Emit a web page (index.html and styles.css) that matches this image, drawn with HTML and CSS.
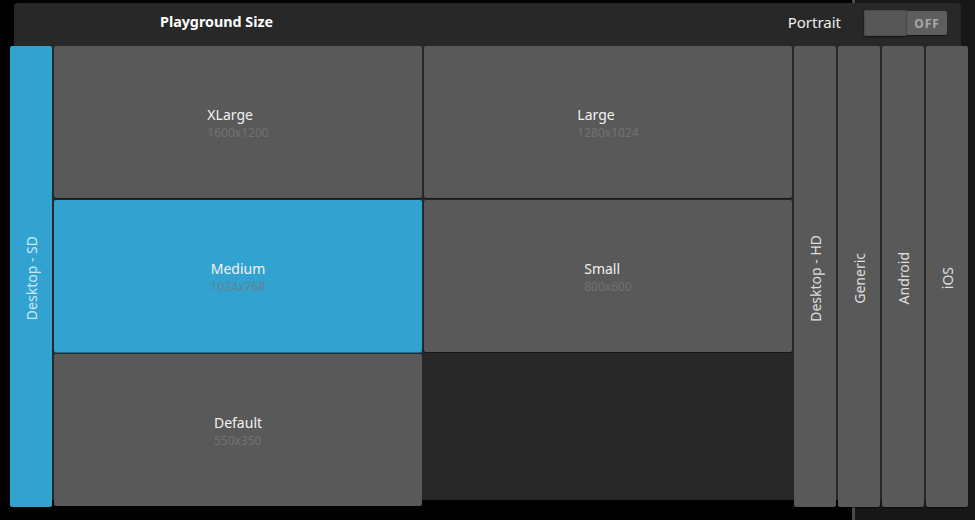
FILE: index.html
```html
<!DOCTYPE html>
<html lang="en">
<head>
  <meta charset="UTF-8" />
  <title>Playground Size</title>
  <link rel="stylesheet" href="styles.css">
</head>
<body>
  <div class="stage">
    <div class="panel">
      <div class="panel-head">
        <div class="panel-title">Playground Size</div>
        <div class="spacer"></div>
        <div class="portrait-label">Portrait</div>
        <div class="toggle">
          <span class="toggle-knob"></span>
          <span class="toggle-state">OFF</span>
        </div>
      </div>

      <div class="tiles">
        <div class="side active"><span>Desktop - SD</span></div>

        <div class="size-grid">
          <div class="size-tile">
            <div class="size-text"><div class="size-name">XLarge</div><div class="size-dim">1600x1200</div></div>
          </div>
          <div class="size-tile">
            <div class="size-text"><div class="size-name">Large</div><div class="size-dim">1280x1024</div></div>
          </div>
          <div class="size-tile active">
            <div class="size-text"><div class="size-name">Medium</div><div class="size-dim">1024x768</div></div>
          </div>
          <div class="size-tile">
            <div class="size-text"><div class="size-name">Small</div><div class="size-dim">800x600</div></div>
          </div>
          <div class="size-tile">
            <div class="size-text"><div class="size-name">Default</div><div class="size-dim">550x350</div></div>
          </div>
        </div>

        <div class="side"><span>Desktop - HD</span></div>
        <div class="side"><span>Generic</span></div>
        <div class="side"><span>Android</span></div>
        <div class="side"><span>iOS</span></div>
      </div>
    </div>
  </div>
</body>
</html>
```

FILE: styles.css
```css
* { margin: 0; padding: 0; box-sizing: border-box; }

html, body {
  height: 100%;
  overflow: hidden;
}

body {
  font-family: 'Noto Sans', 'Open Sans', sans-serif;
  /* pane behind the dialog: black, a grey divider, then a dark strip */
  background: linear-gradient(to right, #000 0, #000 852px, #4a4a4a 852px, #4a4a4a 855px, #171717 855px);
}

.stage {
  padding: 3px 14px 0 14px;
}

.panel {
  height: 497px;
  background: #282828;
  border-radius: 4px;
}

/* header */
.panel-head {
  display: flex;
  align-items: center;
  height: 43px;
  padding: 0 14px 0 146px;
}

.panel-title {
  color: #fff;
  font-size: 14.3px;
  font-weight: bold;
  padding-bottom: 6px;
}

.spacer { flex: 1; }

.portrait-label {
  color: #eee;
  font-size: 15px;
  padding-bottom: 6px;
}

.toggle {
  display: flex;
  align-items: center;
  margin-left: 23px;
  width: 83px;
  height: 26px;
  margin-bottom: 3px;
}

.toggle-knob {
  width: 43px;
  height: 26px;
  background: #575757;
  border-radius: 2px;
  box-shadow: 0 1px 2px rgba(0, 0, 0, 0.6), inset 0 0 0 1px #4c4c4c;
}

.toggle-state {
  flex: 1;
  height: 24px;
  background: #5e5e5e;
  border-radius: 0 2px 2px 0;
  box-shadow: 0 1px 1px rgba(0, 0, 0, 0.5);
  color: #a9a9a9;
  font-size: 12px;
  font-weight: bold;
  letter-spacing: 1px;
  display: flex;
  align-items: center;
  justify-content: center;
}

/* tiles */
.tiles {
  display: flex;
  gap: 2px;
  height: 461px;
  margin: 0 -7px 0 -4px;
}

.side {
  width: 42px;
  flex-shrink: 0;
  background: #595959;
  border-radius: 2px;
  box-shadow: 0 1px 0 rgba(0, 0, 0, 0.45);
  display: flex;
  align-items: center;
  justify-content: center;
  color: #dedede;
  font-size: 14px;
}

.side span {
  writing-mode: vertical-rl;
  transform: rotate(180deg);
  white-space: nowrap;
  margin-top: 4px;
}

.side.active {
  background: #32a3d0;
  color: #cbe8f4;
}

.size-grid {
  display: grid;
  grid-template-columns: 368px 368px;
  grid-template-rows: 152px 152px 152px;
  gap: 2px;
}

.size-tile {
  background: #595959;
  border-radius: 2px;
  box-shadow: 0 1px 0 rgba(0, 0, 0, 0.45);
  display: flex;
  align-items: center;
  justify-content: center;
}

.size-tile.active {
  background: #32a3d0;
  box-shadow: 0 1px 0 #1b6f90;
}

.size-text {
  text-align: left;
  margin-top: 4px;
}

.size-name {
  color: #f2f2f2;
  font-size: 14px;
  line-height: 18px;
}

.size-dim {
  color: #727272;
  font-size: 12px;
  line-height: 18px;
}

.size-tile.active .size-dim {
  color: #67818e;
}
```
